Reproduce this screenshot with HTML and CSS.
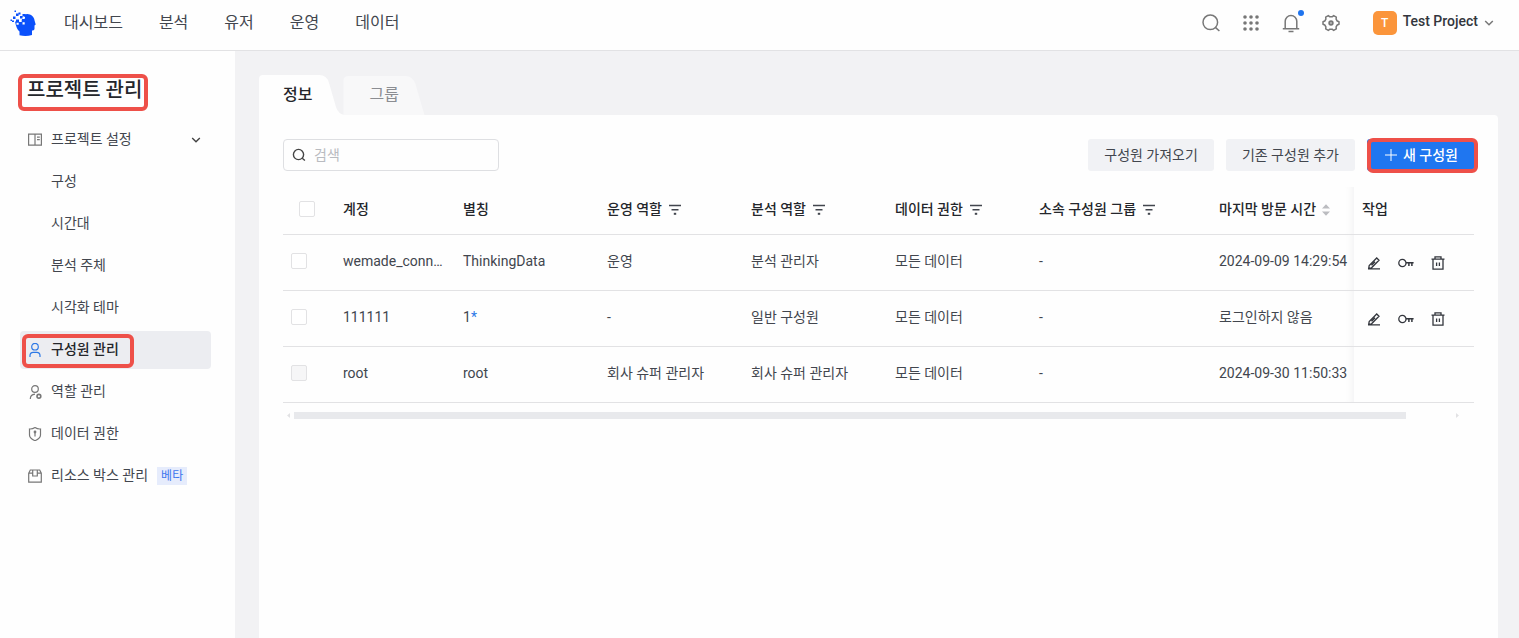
FILE: index.html
```html
<!DOCTYPE html>
<html lang="ko">
<head>
  <meta charset="UTF-8" />
  <meta name="viewport" content="width=device-width, initial-scale=1.0"/>
  <title>구성원 관리</title>
  <link rel="stylesheet" href="styles.css">
</head>
<body>

  <!-- shared icons -->
  <svg class="sprite" aria-hidden="true">
    <symbol id="i-search" viewBox="0 0 20 20"><circle cx="9.3" cy="9.3" r="7.3"/><path d="M14.6 14.6 18.4 18"/></symbol>
    <symbol id="i-down" viewBox="0 0 10 10"><path d="M1.2 3 5 6.8 8.8 3"/></symbol>
    <symbol id="i-filter" viewBox="0 0 12 12"><path d="M0 1.5h12M2.5 5.7h7"/><path d="M4.8 9.8h2.4" stroke-width="2"/></symbol>
    <symbol id="i-edit" viewBox="0 0 14 14"><path d="M1.700 12.300 2.200 9.500 9.700 2l2.300 2.300-7.500 7.500zM1 12.900h12M8 5.800 4.500 9.300"/></symbol>
    <symbol id="i-key" viewBox="0 0 16 14"><circle cx="4.4" cy="7" r="3.6"/><path d="M8 6.800H15.600M10.900 6.800v3.200M13.900 6.800v3.200" stroke-width="1.500"/></symbol>
    <symbol id="i-trash" viewBox="0 0 14 14"><path d="M.5 3.2h13M4 3V.8h6V3M2 3.2v10h10v-10M5.6 6.5v3.5M8.4 6.5v3.5"/></symbol>
  </svg>

  <header class="topbar">
    <a class="logo" href="#" aria-label="홈">
      <svg width="28" height="28" viewBox="0 0 28 28" fill="#0b50fb">
        <path d="M6 12.500 10 13l2-2 3-1 0-4.200q3-1.600 6-.300 4 1.700 4.700 6.400l1 3.600-1.200.900v3.300q0 1.500-1.700 1.700l-.800.200v4.300q-6 2-12.500.300v-3.700Q7.500 20.500 6 12.500z"/>
        <path d="M7 10.500h3v3H7zM10 13h3v3h-3zM13 10h3v3h-3zM11 7h2.500v2.500H11zM13.500 5h3v2.500h-3zM7 4.500h2.500V7H7zM4 7.500h2.500V10H4zM3 11.500h2V13H3zM1.500 10.500h1.500V12H1.500zM5.500 1.500h1.500V3H5.500zM9.500 3.500h2V5.500h-2z"/>
        <path d="M10.200 10.500h2.500v2.500h-2.500zM13.500 13.200h2.200v2.300h-2.200zM14 7.800h2v2h-2zM7.500 13.700h2.200v2H7.500z" fill="#fff"/>
      </svg>
    </a>
    <nav class="topnav">
      <a href="#">대시보드</a>
      <a href="#">분석</a>
      <a href="#">유저</a>
      <a href="#">운영</a>
      <a href="#">데이터</a>
    </nav>
    <div class="tools">
      <button type="button" class="tool" aria-label="검색"><svg class="icon" width="20" height="20"><use href="#i-search"/></svg></button>
      <button type="button" class="tool" aria-label="앱">
        <svg width="20" height="20" viewBox="0 0 20 20" fill="#777"><circle cx="4" cy="4" r="1.800"/><circle cx="10" cy="4" r="1.800"/><circle cx="16" cy="4" r="1.800"/><circle cx="4" cy="10" r="1.800"/><circle cx="10" cy="10" r="1.800"/><circle cx="16" cy="10" r="1.800"/><circle cx="4" cy="16" r="1.800"/><circle cx="10" cy="16" r="1.800"/><circle cx="16" cy="16" r="1.800"/></svg>
      </button>
      <button type="button" class="tool tool-bell" aria-label="알림">
        <svg class="icon" width="20" height="20" viewBox="0 0 20 20"><path d="M1.800 15.800h16.400M4.200 15.800V8.300a5.800 5.800 0 0 1 11.600 0v7.500M7.500 18.500h5"/></svg>
      </button>
      <button type="button" class="tool" aria-label="설정">
        <svg class="icon" width="20" height="20" viewBox="0 0 20 20"><path d="M7.300 2.600 8.900 3.800h2.200l1.600-1.200 2.600 1.500-.200 2 1.100 1.900 1.800.800v2.400l-1.800.800-1.100 1.900.200 2-2.600 1.500-1.600-1.200H8.900l-1.600 1.200-2.600-1.500.200-2L3.800 12 2 11.200V8.800L3.800 8l1.100-1.900-.2-2z" stroke-linejoin="round"/><circle cx="10" cy="10" r="1.700" stroke-width="2"/></svg>
      </button>
    </div>
    <button type="button" class="project">
      <span class="avatar">T</span>
      <span class="project-name">Test Project</span>
      <svg class="icon" width="10" height="10"><use href="#i-down"/></svg>
    </button>
  </header>

  <div class="layout">
    <aside class="sidebar">
      <h1 class="side-title"><span class="marked marked-title">프로젝트 관리</span></h1>
      <nav class="menu">
        <a class="item" href="#">
          <svg class="icon" width="14" height="14" viewBox="0 0 14 14"><path d="M.6 1.200h12.800v11H.6zM7 1.200v11M9 4.200h2.800M9 6.700h2.800"/></svg>
          <span>프로젝트 설정</span>
          <svg class="icon arrow" width="10" height="10"><use href="#i-down"/></svg>
        </a>
        <a class="item sub" href="#"><span>구성</span></a>
        <a class="item sub" href="#"><span>시간대</span></a>
        <a class="item sub" href="#"><span>분석 주체</span></a>
        <a class="item sub" href="#"><span>시각화 테마</span></a>
        <a class="item active marked marked-item" href="#">
          <svg class="icon" width="14" height="14" viewBox="0 0 14 14"><circle cx="7" cy="3.700" r="3.300"/><path d="M2 14v-1.500q0-3.200 3.200-3.200h3.600q3.200 0 3.200 3.200V14"/></svg>
          <span>구성원 관리</span>
        </a>
        <a class="item" href="#">
          <svg class="icon" width="14" height="14" viewBox="0 0 14 14"><circle cx="7" cy="4" r="3.300"/><path d="M2.300 14q0-4.500 4.700-4.900"/><circle cx="10.900" cy="11.300" r="1.900" stroke-width="1.600"/></svg>
          <span>역할 관리</span>
        </a>
        <a class="item" href="#">
          <svg class="icon" width="14" height="14" viewBox="0 0 14 14"><path d="M1.500 2q3 .200 5.500-1.500 2.500 1.700 5.500 1.500v6q0 3.500-5.500 5.700Q1.500 11.500 1.500 8zM7 5.500v4"/><circle cx="7" cy="5" r=".800"/></svg>
          <span>데이터 권한</span>
        </a>
        <a class="item" href="#">
          <svg class="icon" width="14" height="14" viewBox="0 0 14 14"><path d="M.7 4.200 2.300 1h9.400l1.600 3.200v9H.7zM.7 4.200h4M9.300 4.200h4M4.700 1v6h4.600V1"/></svg>
          <span>리소스 박스 관리</span>
          <em class="beta">베타</em>
        </a>
      </nav>
    </aside>

    <main class="main">
      <div class="tabs" role="tablist">
        <button type="button" class="tab tab-on" role="tab" aria-selected="true">정보</button>
        <button type="button" class="tab" role="tab" aria-selected="false">그룹</button>
      </div>

      <section class="panel">
        <div class="toolbar">
          <label class="search">
            <svg class="icon" width="14" height="14"><use href="#i-search"/></svg>
            <input type="text" placeholder="검색" aria-label="검색">
          </label>
          <div class="actions">
            <button type="button" class="btn">구성원 가져오기</button>
            <button type="button" class="btn">기존 구성원 추가</button>
            <button type="button" class="btn btn-primary marked marked-btn">
              <svg width="12" height="12" viewBox="0 0 12 12" stroke="#fff"><path d="M0 6h12M6 0v12"/></svg>
              새 구성원
            </button>
          </div>
        </div>

        <table class="members">
          <colgroup>
            <col class="w-check"><col class="w-account"><col class="w-mid"><col class="w-mid"><col class="w-mid"><col class="w-mid"><col class="w-group"><col><col class="w-ops">
          </colgroup>
          <thead>
            <tr>
              <th class="check"><input type="checkbox" aria-label="전체 선택"></th>
              <th>계정</th>
              <th>별칭</th>
              <th>운영 역할<svg class="filter" width="12" height="12"><use href="#i-filter"/></svg></th>
              <th>분석 역할<svg class="filter" width="12" height="12"><use href="#i-filter"/></svg></th>
              <th>데이터 권한<svg class="filter" width="12" height="12"><use href="#i-filter"/></svg></th>
              <th>소속 구성원 그룹<svg class="filter" width="12" height="12"><use href="#i-filter"/></svg></th>
              <th class="edge">마지막 방문 시간<svg class="sort" width="8" height="12" viewBox="0 0 8 12"><path d="M0 4.500 4 .300l4 4.200zM0 7.500l4 4.200 4-4.200z"/></svg></th>
              <th>작업</th>
            </tr>
          </thead>
          <tbody>
            <tr>
              <td><input type="checkbox" aria-label="wemade_conn 선택"></td>
              <td>wemade_connect</td>
              <td>ThinkingData</td>
              <td>운영</td>
              <td>분석 관리자</td>
              <td>모든 데이터</td>
              <td>-</td>
              <td class="edge">2024-09-09 14:29:54</td>
              <td>
                <div class="ops">
                  <button type="button" aria-label="편집"><svg width="14" height="14"><use href="#i-edit"/></svg></button>
                  <button type="button" aria-label="비밀번호"><svg width="16" height="14"><use href="#i-key"/></svg></button>
                  <button type="button" aria-label="삭제"><svg width="14" height="14"><use href="#i-trash"/></svg></button>
                </div>
              </td>
            </tr>
            <tr>
              <td><input type="checkbox" aria-label="111111 선택"></td>
              <td>111111</td>
              <td>1<span class="star">*</span></td>
              <td>-</td>
              <td>일반 구성원</td>
              <td>모든 데이터</td>
              <td>-</td>
              <td class="edge">로그인하지 않음</td>
              <td>
                <div class="ops">
                  <button type="button" aria-label="편집"><svg width="14" height="14"><use href="#i-edit"/></svg></button>
                  <button type="button" aria-label="비밀번호"><svg width="16" height="14"><use href="#i-key"/></svg></button>
                  <button type="button" aria-label="삭제"><svg width="14" height="14"><use href="#i-trash"/></svg></button>
                </div>
              </td>
            </tr>
            <tr>
              <td><input type="checkbox" aria-label="root 선택" disabled></td>
              <td>root</td>
              <td>root</td>
              <td>회사 슈퍼 관리자</td>
              <td>회사 슈퍼 관리자</td>
              <td>모든 데이터</td>
              <td>-</td>
              <td class="edge">2024-09-30 11:50:33</td>
              <td></td>
            </tr>
          </tbody>
        </table>

        <div class="scroll" aria-hidden="true">
          <svg width="3" height="5" viewBox="0 0 3 5"><path d="M3 0v5L0 2.500z"/></svg>
          <div class="track"><div class="thumb"></div></div>
          <svg width="3" height="5" viewBox="0 0 3 5"><path d="M0 0v5l3-2.500z"/></svg>
        </div>
      </section>
    </main>
  </div>

</body>
</html>
```

FILE: styles.css
```css
* {
  box-sizing: border-box;
}

body {
  margin: 0;
  min-height: 100vh;
  display: flex;
  flex-direction: column;
  background: #f2f2f4;
  color: #42464e;
  font-family: Roboto, "Noto Sans CJK KR", sans-serif;
  font-size: 14px;
  line-height: 22px;
}

a {
  color: inherit;
  text-decoration: none;
}

button {
  border: 0;
  padding: 0;
  background: none;
  color: inherit;
  font: inherit;
  cursor: pointer;
}

svg {
  display: block;
  flex: none;
}

.sprite {
  position: absolute;
  width: 0;
  height: 0;
}

.icon {
  fill: none;
  stroke: #777;
  stroke-width: 1.5;
}

/* red highlight frames */
.marked {
  position: relative;
}

.marked::after {
  content: "";
  position: absolute;
  border: 4px solid #ee5049;
  border-radius: 6px;
}

.marked-title {
  display: inline-block;
}

.marked-title::after {
  inset: -2px -6px -7px -9px;
}

.marked-item::after {
  inset: 3px 77px 1px 2px;
}

.marked-btn::after {
  inset: -1px -4px -2px 0;
}

/* top bar */
.topbar {
  display: flex;
  align-items: center;
  height: 51px;
  padding: 0 25px 5px 9px;
  background: #fefefe;
  border-bottom: 1px solid #e2e2e4;
}

.logo {
  margin-right: 27px;
}

.topnav {
  display: flex;
  gap: 36px;
  flex: 1;
  font-size: 16px;
}

.tools {
  display: flex;
  gap: 20px;
  margin-right: 32px;
}

.tool-bell {
  position: relative;
}

.tool-bell::after {
  content: "";
  position: absolute;
  top: -3px;
  right: -3px;
  width: 6px;
  height: 6px;
  border-radius: 50%;
  background: #1f74ee;
}

.tool svg {
  height: 20px;
}

.tool {
  height: 20px;
}

.project {
  display: flex;
  align-items: center;
  gap: 6px;
  color: #33363d;
}

.avatar {
  width: 24px;
  border-radius: 5px;
  background: #fb953b;
  color: #fff;
  font-size: 12px;
  font-weight: 500;
  line-height: 24px;
}

.project-name {
  padding-bottom: 4px;
  font-weight: 500;
}

.layout {
  display: flex;
  flex: 1;
}

/* sidebar */
.sidebar {
  width: 235px;
  padding: 25px 24px 24px 20px;
  background: #fefefe;
}

.side-title {
  margin: 0 0 17px;
  padding-left: 7px;
  color: #24262b;
  font-size: 20px;
  font-weight: 500;
  line-height: 28px;
}

.menu {
  display: flex;
  flex-direction: column;
  gap: 4px;
}

.item {
  display: flex;
  align-items: center;
  gap: 9px;
  height: 38px;
  padding: 0 10px 0 8px;
  border-radius: 4px;
}

.item .icon {
  stroke-width: 1.2;
}

.item span {
  padding-bottom: 3px;
}

.sub {
  padding-left: 31px;
}

.item .arrow {
  margin-left: auto;
  stroke: #444;
  stroke-width: 1.4;
}

.active {
  background: #ecedf1;
  color: #24262b;
  font-weight: 500;
}

.active .icon {
  stroke: #2c78e6;
}

.beta {
  padding: 0 4px;
  background: #e6ecfc;
  color: #3d76ee;
  font-size: 12px;
  font-style: normal;
  line-height: 18px;
}

/* content */
.main {
  flex: 1;
  display: flex;
  flex-direction: column;
  min-width: 0;
  padding: 24px 21px 0 24px;
}

.tabs {
  display: flex;
  gap: 9px;
}

.tab {
  position: relative;
  z-index: 0;
  height: 40px;
  padding: 0 24px;
  color: #8b8d92;
  font-size: 16px;
}

.tab::before {
  content: "";
  position: absolute;
  z-index: -1;
  top: 0;
  left: -2px;
  width: 86px;
  height: 40px;
  background: #f8f8f9;
  clip-path: path("M0 40V6Q0 1 5 1H62Q69 1 72 9L81 40Z");
}

.tab-on {
  color: #24262b;
  font-weight: 500;
}

.tab-on::before {
  left: 0;
  background: #fefefe;
  clip-path: path("M0 40V4Q0 0 4 0H60Q68 0 70 8L77 32Q79 39 86 40Z");
}

.panel {
  flex: 1;
  padding: 24px;
  background: #fefefe;
  border-radius: 0 4px 0 0;
}

.toolbar {
  display: flex;
  justify-content: space-between;
  margin-bottom: 16px;
}

.search {
  display: flex;
  align-items: center;
  gap: 8px;
  width: 216px;
  height: 32px;
  padding: 0 8px;
  border: 1px solid #dedfe2;
  border-radius: 4px;
}

.search .icon {
  stroke: #444;
  stroke-width: 2;
}

.search input {
  flex: 1;
  min-width: 0;
  border: 0;
  padding: 0;
  outline: 0;
  background: none;
  font: inherit;
}

.search input::placeholder {
  color: #b9bbc0;
}

.actions {
  display: flex;
  gap: 12px;
}

.btn {
  display: flex;
  align-items: center;
  height: 32px;
  padding: 0 16px;
  border-radius: 3px;
  background: #f1f2f5;
}

.btn-primary {
  gap: 6px;
  padding-left: 18px;
  background: #1f76f0;
  color: #fff;
  font-weight: 500;
}

.members {
  width: 100%;
  table-layout: fixed;
  border-collapse: separate;
  border-spacing: 0;
}

.w-check {
  width: 52px;
}

.w-account,
.w-ops {
  width: 120px;
}

.w-mid {
  width: 144px;
}

.w-group {
  width: 180px;
}

.members th,
.members td {
  height: 56px;
  padding: 0 8px 3px;
  border-bottom: 1px solid #e2e2e4;
  text-align: left;
  white-space: nowrap;
  overflow: hidden;
  text-overflow: ellipsis;
}

.members th {
  height: 48px;
  color: #24262b;
  font-weight: 500;
}

.members .check {
  padding-left: 16px;
}

.members .edge {
  padding-right: 0;
  box-shadow: inset -10px 0 8px -8px rgba(20, 20, 40, 0.05);
}

.members input {
  appearance: none;
  display: block;
  width: 16px;
  height: 16px;
  margin: 0;
  border: 1px solid #e2e2e4;
  border-radius: 2px;
  background: #fff;
}

.members input:disabled {
  background: #f6f6f7;
}

.filter,
.sort {
  display: inline-block;
  margin-left: 7px;
  vertical-align: -2px;
}

.filter {
  stroke: #42464e;
  stroke-width: 1.4;
}

.sort {
  margin-left: 6px;
  fill: #bbbcc0;
}

.star {
  color: #2c78e6;
}

.ops {
  display: flex;
  gap: 17px;
  padding: 3px 0 0 5px;
}

.ops svg {
  fill: none;
  stroke: #33363d;
  stroke-width: 1.3;
}

.scroll {
  display: flex;
  align-items: center;
  gap: 4px;
  margin: 9px 15px 0 4px;
  fill: #e2e2e4;
}

.track {
  flex: 1;
}

.thumb {
  width: 96%;
  height: 7px;
  background: #e8e9ec;
}
```
